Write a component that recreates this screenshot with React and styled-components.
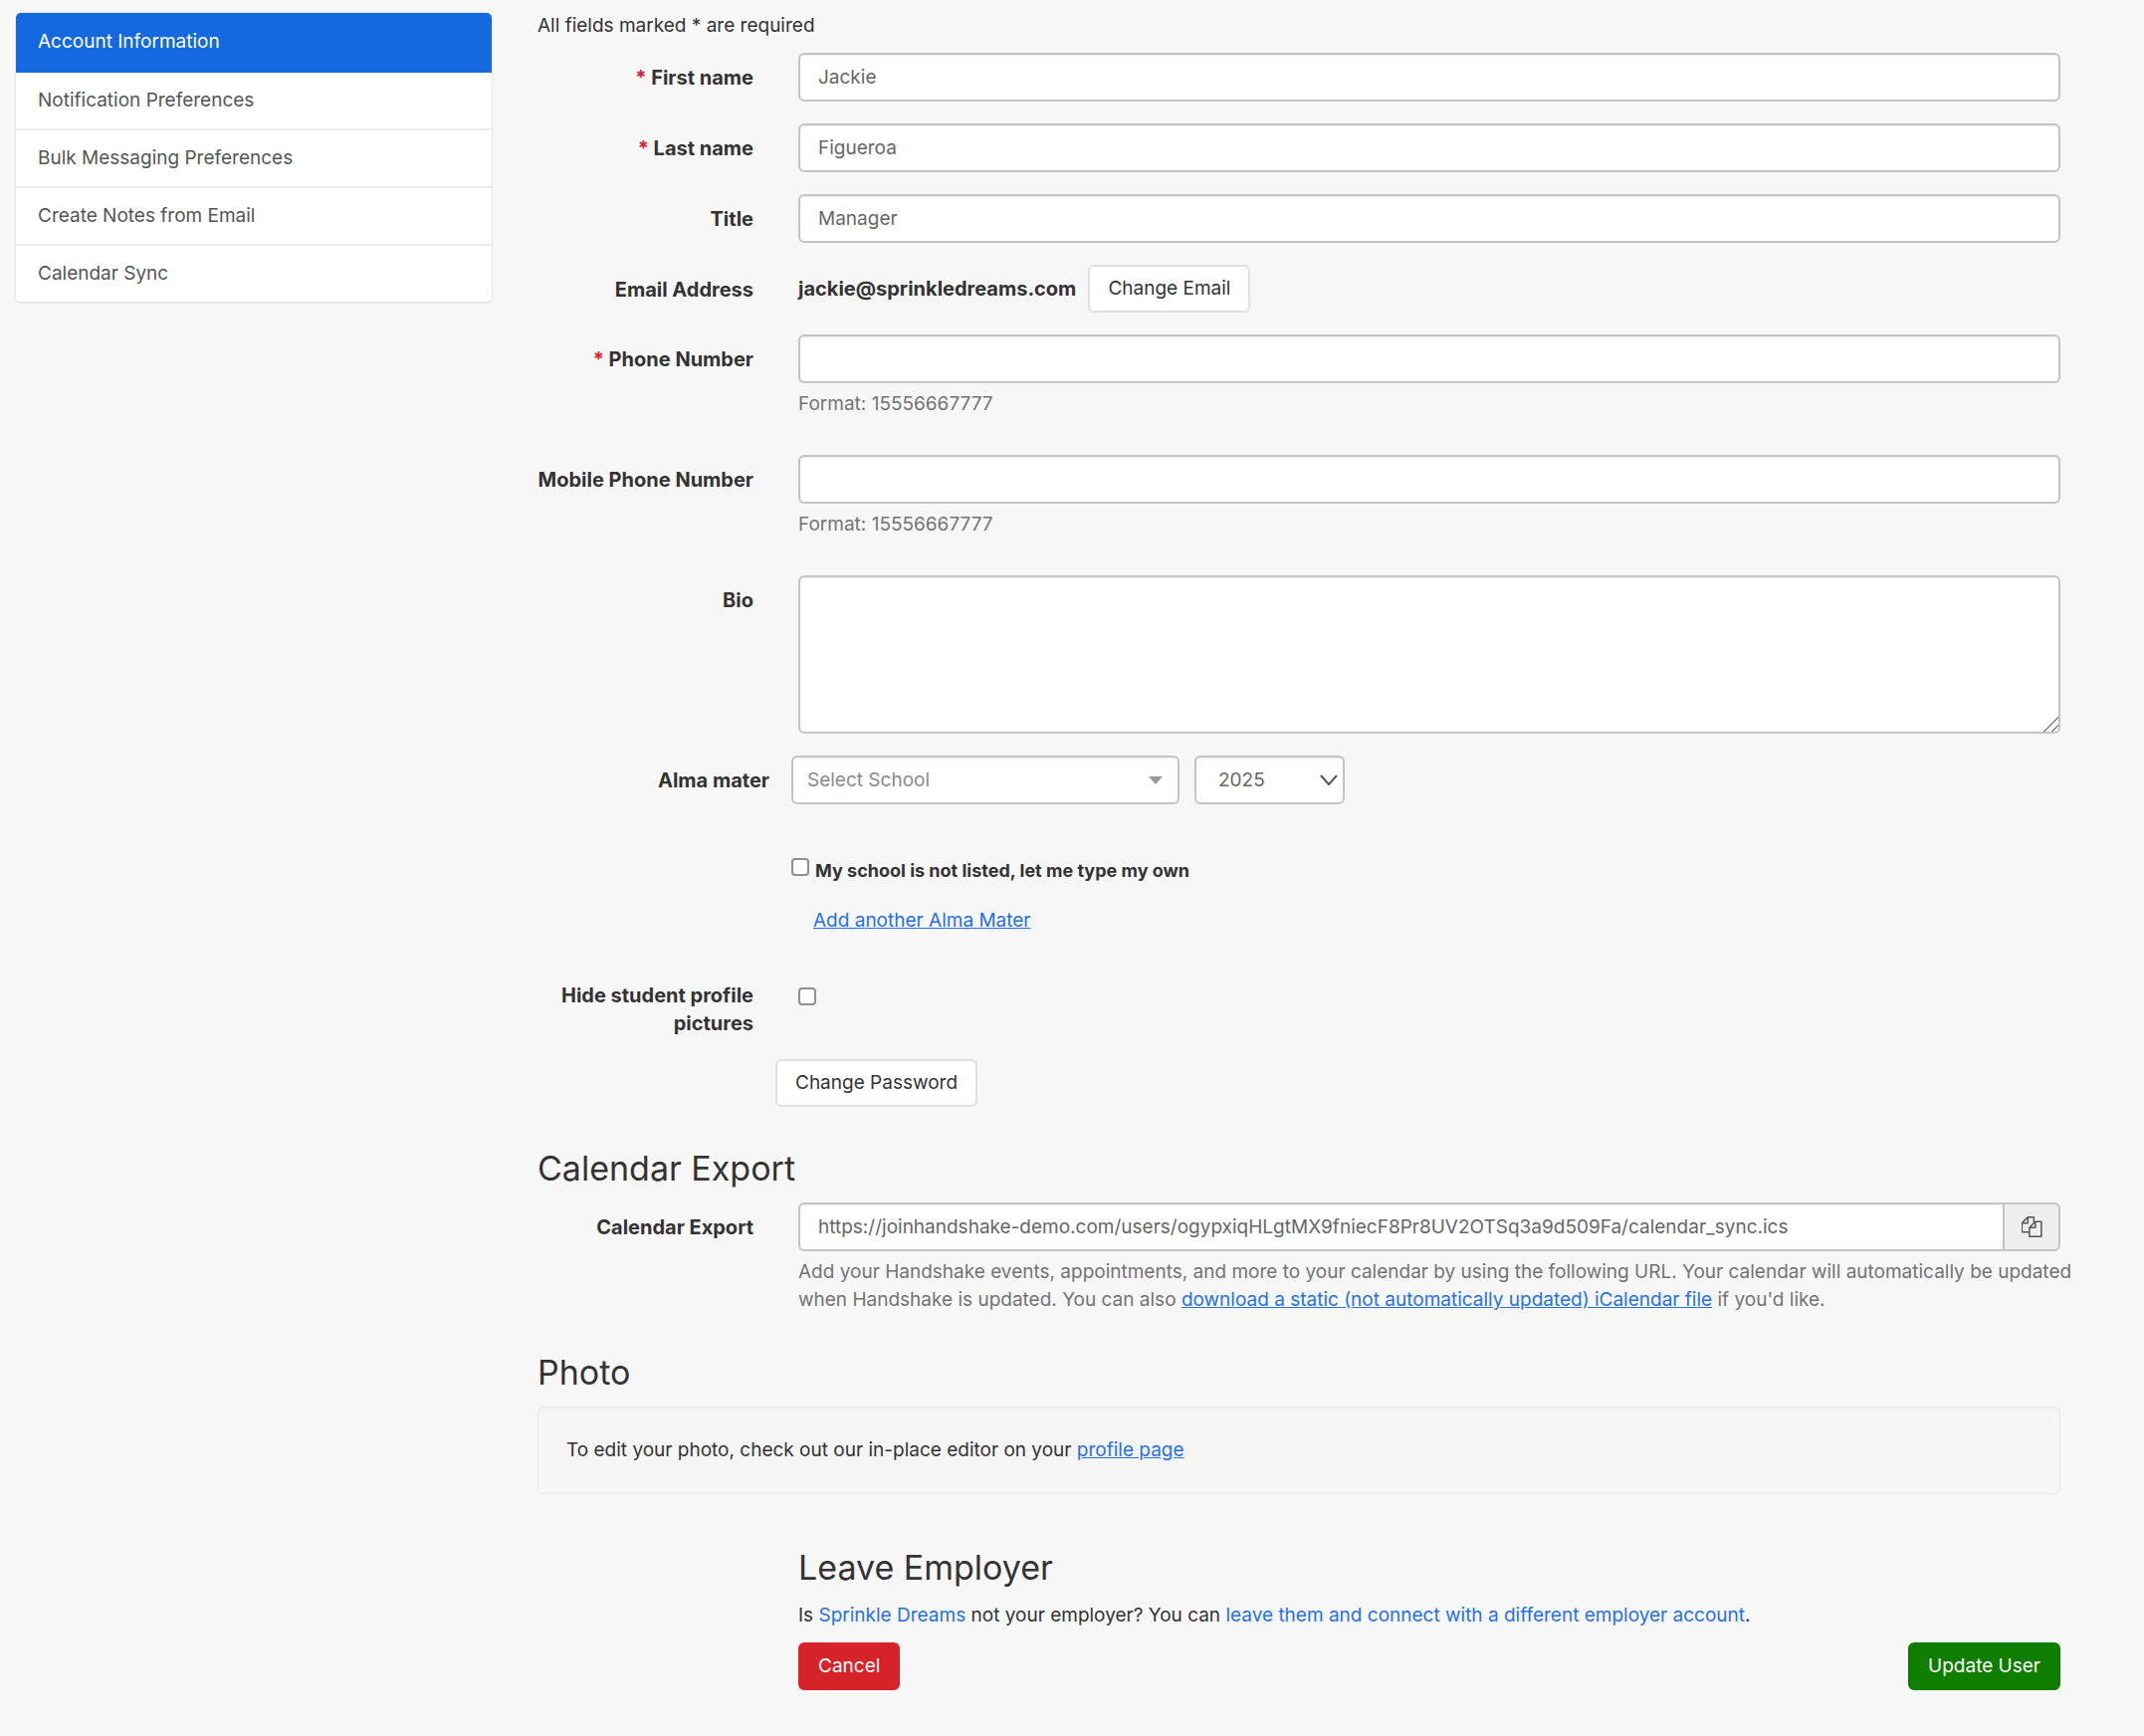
import React from 'react';
import styled, { createGlobalStyle } from 'styled-components';

const GlobalStyle = createGlobalStyle`
  * {
    box-sizing: border-box;
  }

  body {
    margin: 0;
    background: #f7f7f7;
    color: #333;
    font-family: Inter, 'Liberation Sans', sans-serif;
    font-size: 19px;
    line-height: 28px;
  }

  button,
  input,
  select,
  textarea {
    font: inherit;
  }
`;

const Page = styled.div`
  display: grid;
  grid-template-columns: 16fr 51fr;
  align-items: start;
  gap: 45px;
  padding: 12px 84px 47px 15px;
`;

const SideNav = styled.nav`
  border: 1px solid #e6e6e6;
  border-bottom-width: 2px;
  border-radius: 6px;
  background: #fff;
  overflow: hidden;
`;

const NavItem = styled.a`
  display: block;
  padding: 14px 22px;
  border-top: 2px solid #ebebeb;
  background: ${props => (props.$active ? '#1569e0' : '#fff')};
  color: ${props => (props.$active ? '#fff' : '#555')};
  text-decoration: none;

  &:first-child {
    padding-top: 15px;
    padding-bottom: 17px;
    border-top: 0;
  }

  &:first-child + & {
    border-top: 0;
  }
`;

const Intro = styled.p`
  margin: 0 0 13px;
`;

const Row = styled.div`
  display: grid;
  grid-template-columns: 217px 1fr;
  gap: 45px;
  margin-bottom: 22px;
`;

const AlmaRow = styled(Row)`
  grid-template-columns: 233px 1fr;
  gap: 22px;
  margin-bottom: 36px;
`;

const Label = styled.label`
  padding-top: 11px;
  font-size: 20px;
  font-weight: 700;
  text-align: right;
`;

const Required = styled.abbr`
  color: #d9232e;
  text-decoration: none;
`;

const Input = styled.input`
  display: block;
  width: 100%;
  height: 49px;
  padding: 0 18px;
  border: 2px solid #c4c4c4;
  border-radius: 6px;
  background: #fff;
  box-shadow: inset 0 1px 2px rgba(0, 0, 0, 0.08);
  color: #666;
`;

const TextArea = styled(Input).attrs({ as: 'textarea' })`
  height: 159px;
  padding: 10px 18px;
  resize: vertical;

  &::-webkit-resizer {
    background: linear-gradient(
      135deg,
      transparent 49%,
      #888 49%,
      #888 56%,
      transparent 56%,
      transparent 75%,
      #888 75%,
      #888 82%,
      transparent 82%
    );
  }
`;

const Help = styled.p`
  margin: 7px ${props => (props.$wide ? '-16px' : 0)} 15px 0;
  color: #737373;
`;

const Button = styled.button`
  height: 48px;
  padding: 0 18px;
  border: 2px solid ${props => props.$border || '#e0e0e0'};
  border-radius: 6px;
  background: ${props => props.$color || '#fff'};
  color: ${props => (props.$color ? '#fff' : '#333')};
`;

const EmailLine = styled.div`
  display: flex;
  align-items: center;
  gap: 12px;

  strong {
    font-size: 20px;
  }
`;

const SelectLine = styled.div`
  display: flex;
  gap: 15px;
`;

const SelectBox = styled.div`
  position: relative;
  width: ${props => props.$width}px;
  color: ${props => props.$color};

  svg {
    position: absolute;
    top: 0;
    bottom: 0;
    right: ${props => props.$inset}px;
    margin: auto 0;
    pointer-events: none;
  }
`;

const Select = styled(Input).attrs({ as: 'select' })`
  appearance: none;
  padding: 0 ${props => props.$pad}px;
  color: inherit;
`;

const Checkbox = styled.input.attrs({ type: 'checkbox' })`
  appearance: none;
  flex: none;
  width: 18px;
  height: 18px;
  margin: ${props => props.$top}px 0 0;
  border: 2px solid #8f8f8f;
  border-radius: 4px;
  background: #fff;

  &:checked {
    background: #1569e0;
  }
`;

const CheckLine = styled.label`
  display: flex;
  align-items: flex-start;
  gap: 6px;
  margin: 53px 0 22px;
  font-size: 18px;
  font-weight: 700;
`;

const AddLine = styled.div`
  margin-left: 22px;
`;

const Link = styled.a`
  color: #2670e8;
  text-decoration: ${props => (props.$plain ? 'none' : 'underline')};
`;

const PasswordLine = styled.div`
  margin: 0 0 42px 239px;
`;

const Heading = styled.h2`
  margin: 24px 0 14px;
  font-size: 34px;
  font-weight: 400;
  line-height: 40px;
`;

const InputGroup = styled.div`
  display: flex;

  ${Input} {
    flex: 1;
    border-right: 0;
    border-radius: 6px 0 0 6px;
  }
`;

const CopyButton = styled.button`
  display: flex;
  align-items: center;
  justify-content: center;
  width: 58px;
  padding: 0;
  border: 2px solid #c4c4c4;
  border-radius: 0 6px 6px 0;
  background: #eee;
  color: #555;
`;

const Well = styled.div`
  padding: 29px 28px;
  border: 1px solid #e8e8e8;
  border-radius: 6px;
  background: #f5f5f5;
  box-shadow: inset 0 1px 2px rgba(0, 0, 0, 0.05);
`;

const Footer = styled.div`
  margin: 54px 0 0 262px;
`;

const Text = styled.p`
  margin: 0 0 13px;
`;

const Actions = styled.div`
  display: flex;
  justify-content: space-between;
`;

const CopyIcon = () => (
  <svg width="21" height="21" viewBox="0 0 1792 1792" fill="currentColor" aria-hidden="true">
    <path d="M1664 384q40 0 68 28t28 68v1216q0 40-28 68t-68 28h-960q-40 0-68-28t-28-68v-288h-544q-40 0-68-28t-28-68v-672q0-40 20-88t48-76l408-408q28-28 76-48t88-20h416q40 0 68 28t28 68v328q68-40 128-40h416zm-544 213l-299 299h299v-299zm-640-384l-299 299h299v-299zm196 647l316-316v-416h-384v416q0 40-28 68t-68 28h-416v640h512v-256q0-40 20-88t48-76zm956 804v-1152h-384v416q0 40-28 68t-68 28h-416v640h896z" />
  </svg>
);

const navItems = [
  'Account Information',
  'Notification Preferences',
  'Bulk Messaging Preferences',
  'Create Notes from Email',
  'Calendar Sync'
];

const Field = ({ id, label, required, help, value, type = 'text' }) => (
  <Row>
    <Label htmlFor={id}>
      {required && <Required>*</Required>} {label}
    </Label>
    <div>
      <Input id={id} type={type} defaultValue={value} />
      {help && <Help>{help}</Help>}
    </div>
  </Row>
);

const App = () => (
  <>
    <GlobalStyle />
    <Page>
      <SideNav>
        {navItems.map((item, i) => (
          <NavItem key={item} href="#" $active={i === 0}>
            {item}
          </NavItem>
        ))}
      </SideNav>
      <main>
        <Intro>All fields marked * are required</Intro>
        <Field id="first-name" label="First name" value="Jackie" required />
        <Field id="last-name" label="Last name" value="Figueroa" required />
        <Field id="title" label="Title" value="Manager" />
        <Row>
          <Label as="span">Email Address</Label>
          <EmailLine>
            <strong>jackie@sprinkledreams.com</strong>
            <Button type="button">Change Email</Button>
          </EmailLine>
        </Row>
        <Field id="phone" type="tel" label="Phone Number" help="Format: 15556667777" required />
        <Field id="mobile" type="tel" label="Mobile Phone Number" help="Format: 15556667777" />
        <Row>
          <Label htmlFor="bio">Bio</Label>
          <TextArea id="bio" />
        </Row>
        <AlmaRow>
          <Label htmlFor="school">Alma mater</Label>
          <div>
            <SelectLine>
              <SelectBox $width={390} $inset={17} $color="#8a8a8a">
                <Select id="school" $pad={14}>
                  <option>Select School</option>
                </Select>
                <svg width="14" height="8" viewBox="0 0 14 8" aria-hidden="true">
                  <path d="M0 0h14L7 8z" fill="#999" />
                </svg>
              </SelectBox>
              <SelectBox $width={151} $inset={7} $color="#666">
                <Select aria-label="Graduation year" $pad={22}>
                  <option>2025</option>
                </Select>
                <svg width="18" height="12" viewBox="0 0 18 12" fill="none" aria-hidden="true">
                  <path d="M1 1l8 9 8-9" stroke="#555" strokeWidth="2" />
                </svg>
              </SelectBox>
            </SelectLine>
            <CheckLine>
              <Checkbox $top={1} />
              My school is not listed, let me type my own
            </CheckLine>
            <AddLine>
              <Link href="#">Add another Alma Mater</Link>
            </AddLine>
          </div>
        </AlmaRow>
        <Row>
          <Label htmlFor="hide-pictures">Hide student profile pictures</Label>
          <div>
            <Checkbox id="hide-pictures" $top={17} />
          </div>
        </Row>
        <PasswordLine>
          <Button type="button">Change Password</Button>
        </PasswordLine>

        <Heading>Calendar Export</Heading>
        <Row>
          <Label htmlFor="calendar">Calendar Export</Label>
          <div>
            <InputGroup>
              <Input
                id="calendar"
                readOnly
                value="https://joinhandshake-demo.com/users/ogypxiqHLgtMX9fniecF8Pr8UV2OTSq3a9d509Fa/calendar_sync.ics"
              />
              <CopyButton type="button" aria-label="Copy">
                <CopyIcon />
              </CopyButton>
            </InputGroup>
            <Help $wide>
              Add your Handshake events, appointments, and more to your calendar by using the
              following URL. Your calendar will automatically be updated when Handshake is updated.
              You can also{' '}
              <Link href="#">download a static (not automatically updated) iCalendar file</Link> if
              you'd like.
            </Help>
          </div>
        </Row>

        <Heading>Photo</Heading>
        <Well>
          To edit your photo, check out our in-place editor on your{' '}
          <Link href="#">profile page</Link>
        </Well>

        <Footer>
          <Heading>Leave Employer</Heading>
          <Text>
            Is <Link href="#" $plain>Sprinkle Dreams</Link> not your employer? You can{' '}
            <Link href="#" $plain>leave them and connect with a different employer account</Link>.
          </Text>
          <Actions>
            <Button type="button" $color="#d6232a" $border="#d6232a">
              Cancel
            </Button>
            <Button type="submit" $color="#0f7d00" $border="#0f7d00">
              Update User
            </Button>
          </Actions>
        </Footer>
      </main>
    </Page>
  </>
);

export default App;
